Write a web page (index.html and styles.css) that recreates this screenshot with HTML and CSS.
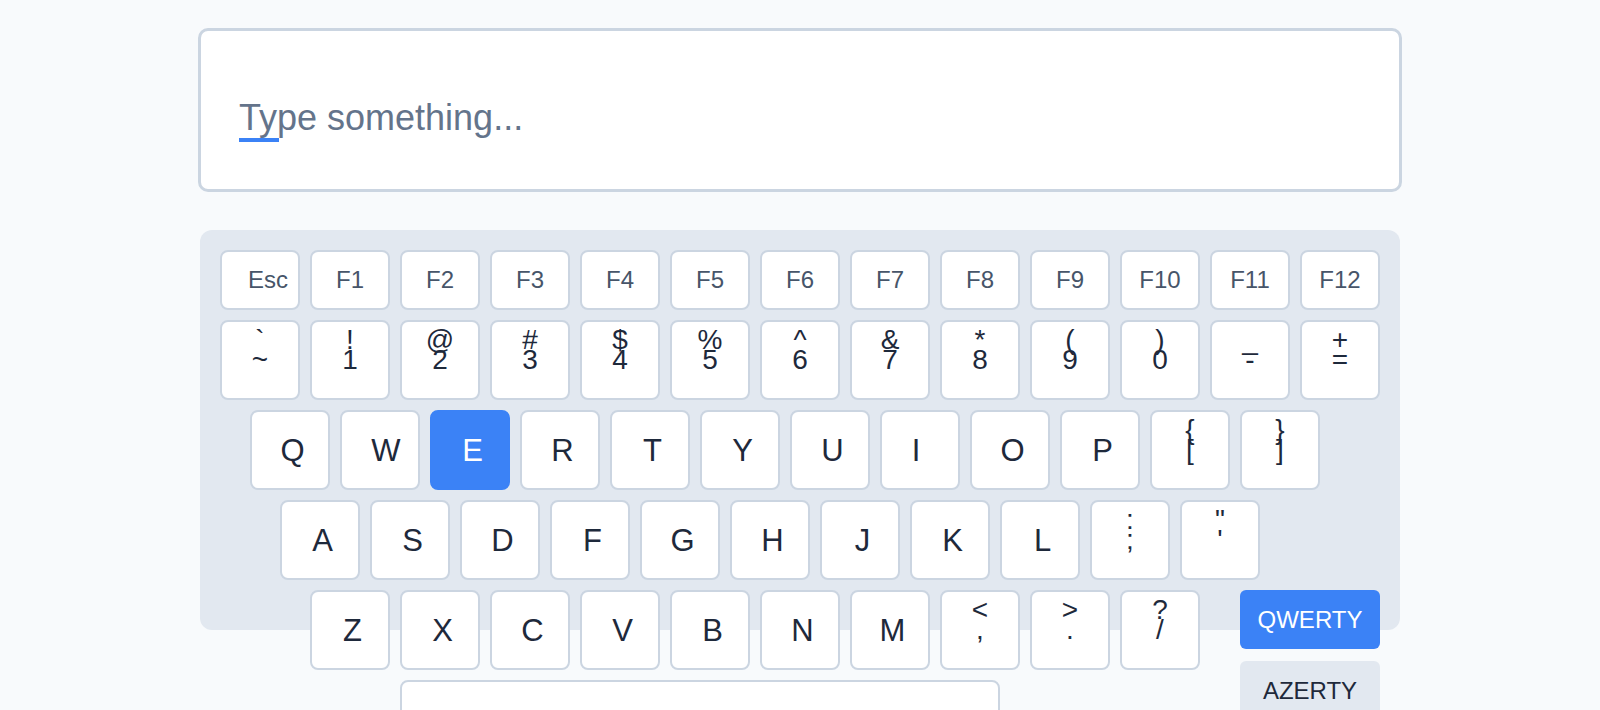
FILE: index.html
```html
<!DOCTYPE html>
<html lang="en">
<head>
<meta charset="utf-8">
<title>Virtual Keyboard</title>
<link rel="stylesheet" href="styles.css">
</head>
<body>
<div class="page">
  <div class="display">
    <div class="typed">Type something...</div>
    <div class="caret"></div>
  </div>

  <div class="keyboard">
    <div class="row row-fn">
      <div class="key esc"><span class="main">Esc</span></div>
      <div class="key"><span class="main">F1</span></div>
      <div class="key"><span class="main">F2</span></div>
      <div class="key"><span class="main">F3</span></div>
      <div class="key"><span class="main">F4</span></div>
      <div class="key"><span class="main">F5</span></div>
      <div class="key"><span class="main">F6</span></div>
      <div class="key"><span class="main">F7</span></div>
      <div class="key"><span class="main">F8</span></div>
      <div class="key"><span class="main">F9</span></div>
      <div class="key"><span class="main">F10</span></div>
      <div class="key"><span class="main">F11</span></div>
      <div class="key"><span class="main">F12</span></div>
    </div>

    <div class="row row-num">
      <div class="key dual"><span class="shift">`</span><span class="main">~</span></div>
      <div class="key dual"><span class="shift">!</span><span class="main">1</span></div>
      <div class="key dual"><span class="shift">@</span><span class="main">2</span></div>
      <div class="key dual"><span class="shift">#</span><span class="main">3</span></div>
      <div class="key dual"><span class="shift">$</span><span class="main">4</span></div>
      <div class="key dual"><span class="shift">%</span><span class="main">5</span></div>
      <div class="key dual"><span class="shift">^</span><span class="main">6</span></div>
      <div class="key dual"><span class="shift">&amp;</span><span class="main">7</span></div>
      <div class="key dual"><span class="shift">*</span><span class="main">8</span></div>
      <div class="key dual"><span class="shift">(</span><span class="main">9</span></div>
      <div class="key dual"><span class="shift">)</span><span class="main">0</span></div>
      <div class="key dual"><span class="shift">_</span><span class="main">-</span></div>
      <div class="key dual"><span class="shift">+</span><span class="main">=</span></div>
    </div>

    <div class="row row-q">
      <div class="key letter"><span class="main">Q</span></div>
      <div class="key letter wide-w"><span class="main">W</span></div>
      <div class="key letter active"><span class="main">E</span></div>
      <div class="key letter"><span class="main">R</span></div>
      <div class="key letter"><span class="main">T</span></div>
      <div class="key letter"><span class="main">Y</span></div>
      <div class="key letter"><span class="main">U</span></div>
      <div class="key letter narrow-i"><span class="main">I</span></div>
      <div class="key letter"><span class="main">O</span></div>
      <div class="key letter"><span class="main">P</span></div>
      <div class="key dual"><span class="shift">{</span><span class="main">[</span></div>
      <div class="key dual"><span class="shift">}</span><span class="main">]</span></div>
    </div>

    <div class="row row-a">
      <div class="key letter"><span class="main">A</span></div>
      <div class="key letter"><span class="main">S</span></div>
      <div class="key letter"><span class="main">D</span></div>
      <div class="key letter"><span class="main">F</span></div>
      <div class="key letter"><span class="main">G</span></div>
      <div class="key letter"><span class="main">H</span></div>
      <div class="key letter"><span class="main">J</span></div>
      <div class="key letter"><span class="main">K</span></div>
      <div class="key letter"><span class="main">L</span></div>
      <div class="key dual"><span class="shift">:</span><span class="main">;</span></div>
      <div class="key dual"><span class="shift">"</span><span class="main">'</span></div>
    </div>

    <div class="row row-z">
      <div class="key letter"><span class="main">Z</span></div>
      <div class="key letter"><span class="main">X</span></div>
      <div class="key letter"><span class="main">C</span></div>
      <div class="key letter"><span class="main">V</span></div>
      <div class="key letter"><span class="main">B</span></div>
      <div class="key letter"><span class="main">N</span></div>
      <div class="key letter"><span class="main">M</span></div>
      <div class="key dual"><span class="shift">&lt;</span><span class="main">,</span></div>
      <div class="key dual"><span class="shift">&gt;</span><span class="main">.</span></div>
      <div class="key dual"><span class="shift">?</span><span class="main">/</span></div>
      <div class="layouts">
        <button class="layout active">QWERTY</button>
        <button class="layout">AZERTY</button>
      </div>
    </div>

    <div class="row row-space">
      <div class="key space"></div>
    </div>
  </div>
</div>
</body>
</html>
```

FILE: styles.css
```css
html, body {
  margin: 0;
  padding: 0;
  background: #f8fafc;
}

body {
  font-family: "Liberation Sans", Arial, Helvetica, sans-serif;
  color: #1e293b;
}

.page {
  width: 1200px;
  margin: 0 auto;
  padding-top: 28px;
}

.display {
  box-sizing: border-box;
  width: 1204px;
  height: 164px;
  margin-left: -2px;
  padding: 68.5px 38px 0;
  background: #ffffff;
  border: 3px solid #cbd5e1;
  border-radius: 10px;
}

.typed {
  font-size: 36px;
  line-height: 36px;
  color: #64748b;
}

.caret {
  width: 40px;
  height: 4px;
  margin-top: 2px;
  background: #3b82f6;
}

/* keyboard panel: grey plate is a fixed 400px backdrop, keys flow past it */
.keyboard {
  box-sizing: border-box;
  position: relative;
  isolation: isolate;
  width: 1200px;
  margin-top: 38px;
  padding: 15px;
}

.keyboard::before {
  content: "";
  position: absolute;
  top: 0;
  left: 0;
  right: 0;
  height: 400px;
  background: #e2e8f0;
  border-radius: 12px;
  z-index: -1;
}

.row {
  display: flex;
  align-items: flex-start;
}

.row-q { padding-left: 30px; }
.row-a { padding-left: 60px; }
.row-z { padding-left: 90px; }
.row-space {
  padding-left: 180px;
  margin-top: -50px;
}

.key {
  box-sizing: border-box;
  flex: none;
  position: relative;
  width: 80px;
  height: 80px;
  margin: 5px;
  display: flex;
  align-items: center;
  justify-content: center;
  background: #ffffff;
  border: 2px solid #cbd5e1;
  border-radius: 8px;
  color: #1e293b;
  font-size: 31px;
}

.key .main {
  line-height: 1;
}

.key.letter {
  padding-left: 5px;
}

.key.letter.wide-w {
  padding-left: 12px;
}

.key.letter.narrow-i {
  padding-left: 0;
  padding-right: 8px;
}

.row-fn .key {
  height: 60px;
  font-size: 24px;
  color: #475569;
}

.key.esc {
  padding-left: 16px;
}

.key.dual {
  font-size: 28px;
}

.key.dual .shift {
  position: absolute;
  top: 4px;
  left: 0;
  right: 0;
  text-align: center;
  line-height: 28px;
}

.key.active {
  background: #3b82f6;
  border-color: #3b82f6;
  color: #ffffff;
}

.key.space {
  width: 600px;
}

.layouts {
  flex: none;
  margin: 5px 5px 5px auto;
  display: flex;
  flex-direction: column;
  gap: 12px;
}

.layout {
  flex: none;
  width: 140px;
  height: 59px;
  padding: 0;
  border: none;
  border-radius: 6px;
  background: #e2e8f0;
  color: #1e293b;
  font-family: "Liberation Sans", Arial, Helvetica, sans-serif;
  font-size: 24px;
  cursor: pointer;
}

.layout.active {
  background: #3b82f6;
  color: #ffffff;
}
```
